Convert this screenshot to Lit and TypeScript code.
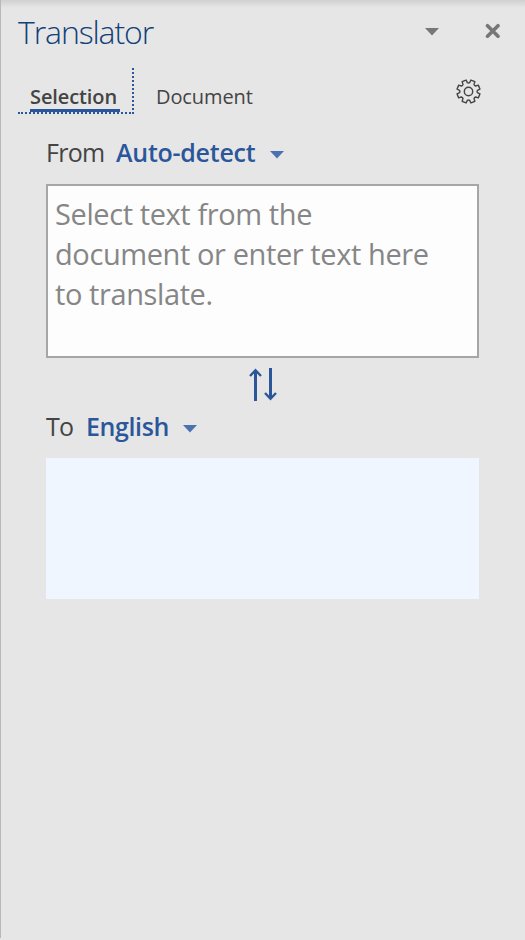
import { LitElement, html, css, svg } from "lit";
import { customElement } from "lit/decorators.js";

const gearPath = (): string => {
  const pts: string[] = [];
  const teeth = 8;
  const at = (r: number, deg: number) => {
    const a = (deg * Math.PI) / 180;
    return `${(12.5 + r * Math.sin(a)).toFixed(2)} ${(12.5 - r * Math.cos(a)).toFixed(2)}`;
  };
  for (let i = 0; i < teeth; i++) {
    const c = i * 45 + 22.5;
    pts.push(`${i ? "L" : "M"}${at(9, c - 15)}`);
    pts.push(`L${at(11.7, c - 10.5)}`);
    pts.push(`L${at(11.7, c + 10.5)}`);
    pts.push(`L${at(9, c + 15)}`);
    pts.push(`Q${at(8.2, c + 22.5)} ${at(9, c + 30)}`);
  }
  return pts.join("") + "Z";
};

@customElement("app-root")
export class AppRoot extends LitElement {
  static styles = css`
    :host {
      display: block;
      box-sizing: border-box;
      height: 940px;
      background: linear-gradient(#d0d0d0, #e6e6e6 8px);
      font-family: "Open Sans", "Noto Sans", sans-serif;
      color: #444;
      white-space: nowrap;
    }
    .pane {
      box-sizing: border-box;
      height: 938px;
      border-left: 1px solid #b9b9b9;
      padding: 0 46px 0 17px;
    }
    svg { display: block; flex: none; }
    .header {
      display: flex;
      align-items: center;
      height: 68px;
      margin-right: -22px;
      padding-bottom: 6px;
      box-sizing: border-box;
    }
    .title {
      flex: 1;
      margin: 0;
      font-size: 32px;
      line-height: 44px;
      font-weight: 330;
      letter-spacing: -1.1px;
      color: #124078;
      padding-top: 2px;
    }
    .menu { margin: 1px 46px 0 0; }
    .tabs { display: flex; height: 46px; font-size: 20px; line-height: 28px; }
    .tab { box-sizing: border-box; height: 46px; padding-top: 15px; letter-spacing: -0.1px; }
    .active {
      width: 116px;
      padding-left: 12px;
      border-right: 2px dotted #2b579a;
      border-bottom: 2px dotted #2b579a;
      font-weight: 600;
    }
    .label { display: block; width: 90px; height: 26px; border-bottom: 3px solid #2b579a; }
    .document { margin-left: 22px; flex: 1; }
    .gear { margin: 11px -2px 0 0; }
    .content { padding-left: 28px; }
    .language { display: flex; align-items: center; font-size: 25px; line-height: 36px; }
    .language > span { letter-spacing: -0.7px; }
    .language strong { font-weight: 600; letter-spacing: -0.26px; color: #2b579a; }
    .language svg { margin-top: 5px; }
    .from { height: 36px; padding: 20px 0 14px; }
    .from > span { width: 70px; }
    .from strong { width: 154px; }
    .source {
      box-sizing: border-box;
      height: 174px;
      border: 2px solid #a6a6a6;
      background: #fdfdfd;
      padding: 8px 7px;
      font-size: 29px;
      line-height: 40px;
      letter-spacing: -0.4px;
      color: #868686;
    }
    .source span { display: block; width: max-content; }
    .swap { margin: 9px auto 0 203px; }
    .to { height: 36px; padding: 6px 0 14px; }
    .to > span { width: 40px; }
    .to strong { width: 97px; letter-spacing: -0.4px; }
    .result { height: 141px; background: #eff6ff; }
  `;

  private caret(color: string) {
    return html`<svg width="14" height="8" viewBox="0 0 14 8"><path d="M0 0H14L7 7.5Z" fill=${color} /></svg>`;
  }

  render() {
    return html`
      <section class="pane">
        <header class="header">
          <h1 class="title"><span>Translator</span></h1>
          <span class="menu">${this.caret("#777")}</span>
          <svg width="16" height="16" viewBox="0 0 16 16"><path d="M2.5 2.7L13 13.2M13 2.7L2.5 13.2" stroke="#777" stroke-width="3.6" stroke-linecap="round" /></svg>
        </header>
        <nav class="tabs">
          <div class="tab active"><span class="label">Selection</span></div>
          <div class="tab document"><span>Document</span></div>
          <svg class="gear" width="25" height="25" viewBox="0 0 25 25" fill="none" stroke="#444" stroke-width="1.4" stroke-linejoin="round">
            ${svg`<path d=${gearPath()} />`}
            <circle cx="12.5" cy="12.5" r="4.2" />
          </svg>
        </nav>
        <main class="content">
          <div class="language from"><span>From</span><strong>Auto-detect</strong>${this.caret("#4a72b0")}</div>
          <div class="source"><span>Select text from the</span><span>document or enter text here</span><span>to translate.</span></div>
          <svg class="swap" width="28" height="35" viewBox="0 0 28 35" fill="none" stroke="#2b579a">
            <path d="M6.5 34V3M21.5 1V32" stroke-width="3" />
            <path d="M1 9L6.5 3.2L12 9M16 26L21.5 31.8L27 26" stroke-width="2.4" />
          </svg>
          <div class="language to"><span>To</span><strong>English</strong>${this.caret("#4a72b0")}</div>
          <div class="result"></div>
        </main>
      </section>
    `;
  }
}
